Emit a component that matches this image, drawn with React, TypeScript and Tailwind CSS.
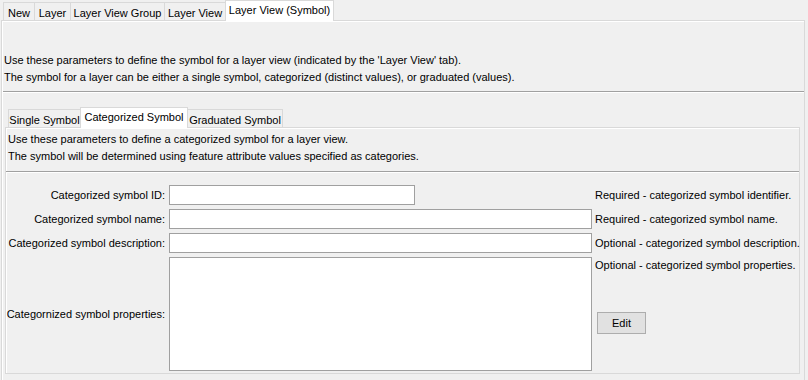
const outerTabs = [
  { label: "New", w: 32 },
  { label: "Layer", w: 37 },
  { label: "Layer View Group", w: 95 },
  { label: "Layer View", w: 62 },
  { label: "Layer View (Symbol)", w: 109, active: true },
];

const innerTabs = [
  { label: "Single Symbol", w: 73 },
  { label: "Categorized Symbol", w: 108, active: true },
  { label: "Graduated Symbol", w: 96 },
];

type Tab = { label: string; w: number; active?: boolean };

function TabStrip({ tabs, offset }: { tabs: Tab[]; offset: string }) {
  return (
    <div className={`flex items-end h-[21px] relative z-10 ${offset}`}>
      {tabs.map((t, i) => (
        <div
          key={t.label}
          style={{ width: t.w }}
          className={
            t.active
              ? "h-[21px] bg-white border border-b-0 border-[#d9d9d9] -ml-px flex items-start justify-center pt-[2px] shrink-0"
              : `h-[19px] border border-b-0 border-[#d9d9d9] ${i > 0 ? "-ml-px" : ""} flex items-start justify-center pt-[3px] shrink-0`
          }
        >
          <span className="leading-[14px] whitespace-nowrap">{t.label}</span>
        </div>
      ))}
    </div>
  );
}

function Separator({ className }: { className: string }) {
  return (
    <div className={className}>
      <div className="h-px bg-[#a0a0a0]" />
      <div className="h-px bg-white" />
    </div>
  );
}

function Field({ w }: { w: string }) {
  return (
    <input
      type="text"
      className={`h-[20px] ${w} bg-white border border-[#a0a0a0] outline-none`}
    />
  );
}

function Label({ text }: { text: string }) {
  return <div className="text-right pr-[4px] whitespace-nowrap">{text}</div>;
}

function Help({ text }: { text: string }) {
  return <div className="pl-[3px] whitespace-nowrap">{text}</div>;
}

function CategorizedForm() {
  return (
    <div className="grid grid-cols-[163px_423px_1fr] gap-y-[4px] items-center mt-[12px]">
      <Label text="Categorized symbol ID:" />
      <Field w="w-[246px]" />
      <Help text="Required - categorized symbol identifier." />

      <Label text="Categorized symbol name:" />
      <Field w="w-[423px]" />
      <Help text="Required - categorized symbol name." />

      <Label text="Categorized symbol description:" />
      <Field w="w-[423px]" />
      <Help text="Optional - categorized symbol description." />

      <Label text="Categornized symbol properties:" />
      <textarea className="h-[114px] w-[423px] bg-white border border-[#a0a0a0] resize-none outline-none" />
      <div className="self-start flex flex-col items-start pl-[3px]">
        <div className="leading-[17px] whitespace-nowrap">
          Optional - categorized symbol properties.
        </div>
        <button className="mt-[38px] ml-[2px] w-[49px] h-[22px] bg-[#e1e1e1] border border-[#adadad] leading-none">
          Edit
        </button>
      </div>
    </div>
  );
}

export default function App() {
  return (
    <div className="w-[808px] h-[380px] overflow-hidden bg-[#f0f0f0] text-black text-[11px] leading-[17px] font-['Liberation_Sans',Arial,sans-serif]">
      <TabStrip tabs={outerTabs} offset="pl-[3px]" />
      <div className="ml-[1px] w-[804px] h-[370px] -mt-px border border-[#d9d9d9] shadow-[inset_1px_1px_0_#ffffff]">
        <div className="pt-[31px] pl-[2px]">
          <p>Use these parameters to define the symbol for a layer view (indicated by the 'Layer View' tab).</p>
          <p>The symbol for a layer can be either a single symbol, categorized (distinct values), or graduated (values).</p>
        </div>
        <Separator className="mt-[5px] ml-[1px]" />

        <div className="mt-[14px] ml-[3px] mr-[4px]">
          <TabStrip tabs={innerTabs} offset="pl-[3px]" />
          <div className="-mt-px h-[247px] border border-[#d9d9d9] shadow-[inset_1px_1px_0_#ffffff]">
            <div className="pt-[3px] pl-[2px]">
              <p>Use these parameters to define a categorized symbol for a layer view.</p>
              <p>The symbol will be determined using feature attribute values specified as categories.</p>
            </div>
            <Separator className="mt-[6px]" />
            <CategorizedForm />
          </div>
        </div>
      </div>
    </div>
  );
}
